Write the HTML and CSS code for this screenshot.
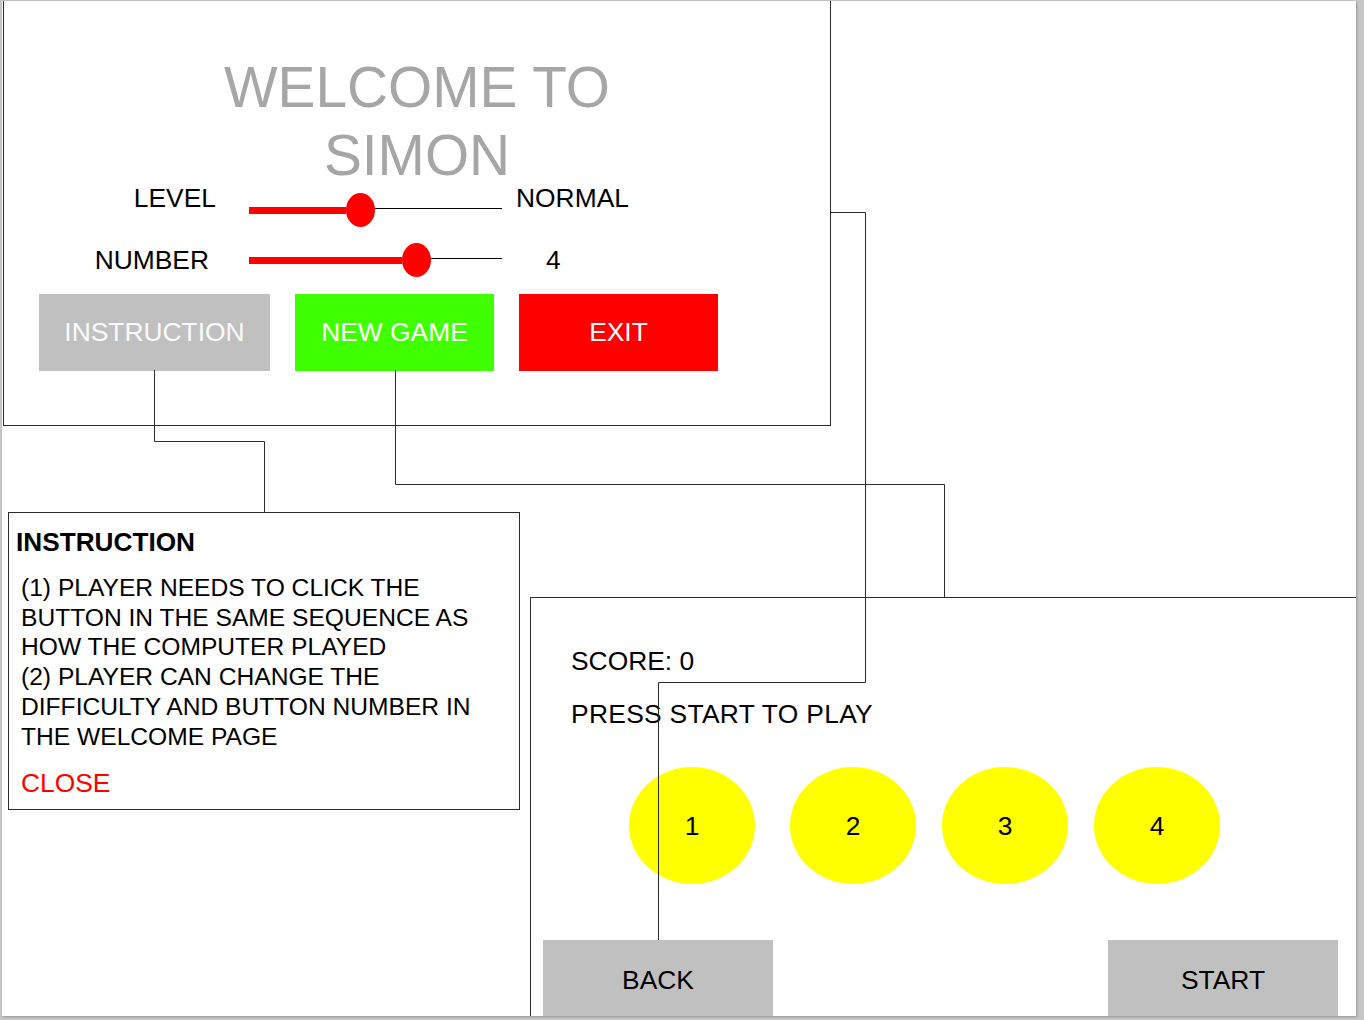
FILE: index.html
```html
<!DOCTYPE html>
<html lang="en">
<head>
<meta charset="utf-8">
<title>Simon wireframe</title>
<link rel="stylesheet" href="styles.css">
</head>
<body>
<div class="sheet">

  <section class="frame welcome">
    <h1 class="welcome-title">WELCOME TO<br>SIMON</h1>

    <div class="setting setting-level">
      <span class="setting-label">LEVEL</span>
      <div class="slider">
        <span class="slider-fill" style="width:97px"></span>
        <span class="slider-knob"></span>
        <span class="slider-rest"></span>
      </div>
      <span class="setting-value">NORMAL</span>
    </div>

    <div class="setting setting-number">
      <span class="setting-label">NUMBER</span>
      <div class="slider">
        <span class="slider-fill" style="width:153px"></span>
        <span class="slider-knob"></span>
        <span class="slider-rest"></span>
      </div>
      <span class="setting-value">4</span>
    </div>

    <div class="menu">
      <button class="menu-btn btn-instruction">INSTRUCTION</button>
      <button class="menu-btn btn-new">NEW GAME</button>
      <button class="menu-btn btn-exit">EXIT</button>
    </div>
  </section>

  <section class="frame instructions">
    <h2 class="instructions-title">INSTRUCTION</h2>
    <p class="instructions-body">(1) PLAYER NEEDS TO CLICK THE<br>BUTTON IN THE SAME SEQUENCE AS<br>HOW THE COMPUTER PLAYED<br>(2) PLAYER CAN CHANGE THE<br>DIFFICULTY AND BUTTON NUMBER IN<br>THE WELCOME PAGE</p>
    <div class="instructions-close">CLOSE</div>
  </section>

  <section class="frame game">
    <div class="game-score">SCORE: 0</div>
    <div class="game-status">PRESS START TO PLAY</div>
    <div class="pads">
      <div class="pad pad-first">1</div>
      <div class="pad">2</div>
      <div class="pad">3</div>
      <div class="pad">4</div>
    </div>
    <div class="game-actions">
      <button class="game-btn">BACK</button>
      <button class="game-btn">START</button>
    </div>
  </section>

  <svg class="connectors" width="1364" height="1020" viewBox="0 0 1364 1020" aria-hidden="true">
    <path d="M154.5 370 V441.5 H264.5 V512"/>
    <path d="M395.5 370 V484.5 H944.5 V597"/>
    <path d="M831 212.5 H865.5 V682.5 H658.5 V940"/>
  </svg>

</div>
</body>
</html>
```

FILE: styles.css
```css
html, body {
  margin: 0;
  padding: 0;
}

body {
  background: #c6c6c6;
  width: 1364px;
  height: 1020px;
  overflow: hidden;
  font-family: "Liberation Sans", Arial, Helvetica, sans-serif;
  color: #000;
}

.sheet {
  position: relative;
  margin: 1px 0 0 2px;
  width: 1354px;
  height: 1015px;
  background: #fff;
  overflow: hidden;
  box-shadow: 1px 1px 2px rgba(0, 0, 0, 0.25);
}

.frame {
  position: absolute;
  box-sizing: border-box;
  border: 1px solid #2b2b2b;
  background: #fff;
}

/* ---------- Welcome window ---------- */
.welcome {
  left: 1px;
  top: -1px;
  width: 828px;
  height: 426px;
  padding-top: 53px;
}

.welcome-title {
  margin: 0 0 -7px;
  font-size: 56.8px;
  line-height: 68px;
  font-weight: normal;
  color: #a6a6a6;
  text-align: center;
}

.setting {
  display: flex;
  align-items: flex-start;
  font-size: 26.4px;
  line-height: 30px;
}

.setting-label {
  flex: none;
  width: 212px;
  box-sizing: border-box;
  text-align: right;
}

.slider {
  flex: none;
  display: flex;
  align-items: center;
  width: 253px;
  height: 34px;
  margin-left: 33px;
}

.slider-fill {
  flex: none;
  height: 7px;
  background: #ff0000;
}

.slider-knob {
  flex: none;
  width: 29px;
  height: 34px;
  border-radius: 50%;
  background: #ff0000;
}

.slider-rest {
  flex: 1;
  height: 1px;
  margin-bottom: 3px;
  background: #000;
}

.setting-value {
  flex: none;
}

.setting-level .slider {
  margin-top: 10px;
}

.setting-level .setting-value {
  margin-left: 14px;
}

.setting-number {
  margin-top: 18px;
}

.setting-number .setting-label {
  padding-right: 7px;
}

.setting-number .slider {
  margin-top: -2px;
}

.setting-number .setting-value {
  margin-left: 44px;
}

.menu {
  display: flex;
  gap: 25px;
  margin-top: 17px;
  padding-left: 35px;
}

.menu-btn {
  flex: none;
  height: 77px;
  width: 199px;
  border: none;
  padding: 0;
  margin: 0;
  font-family: inherit;
  font-size: 26.4px;
  color: #fff;
}

.btn-instruction {
  width: 231px;
  background: #c0c0c0;
  color: #fafafa;
}

.btn-new {
  background: #40ff00;
}

.btn-exit {
  background: #ff0000;
}

/* ---------- Instruction window ---------- */
.instructions {
  left: 6px;
  top: 511px;
  width: 512px;
  height: 298px;
  padding: 14px 0 0 7px;
}

.instructions-title {
  margin: 0;
  font-size: 26.2px;
  line-height: 30px;
  font-weight: bold;
}

.instructions-body {
  margin: 16px 0 0;
  padding-left: 5px;
  font-size: 24.6px;
  line-height: 29.7px;
}

.instructions-close {
  margin-top: 17px;
  padding-left: 5px;
  font-size: 26.4px;
  line-height: 30px;
  color: #ff0000;
}

/* ---------- Game window ---------- */
.game {
  left: 528px;
  top: 596px;
  width: 830px;
  height: 440px;
  padding-top: 48px;
}

.game-score,
.game-status {
  padding-left: 40px;
  font-size: 26.4px;
  line-height: 30px;
}

.game-status {
  margin-top: 23px;
  letter-spacing: 0.3px;
}

.pads {
  display: flex;
  gap: 26px;
  margin-top: 38px;
  padding-left: 98px;
}

.pad {
  flex: none;
  width: 126px;
  height: 117px;
  border-radius: 50%;
  background: #ffff00;
  display: flex;
  align-items: center;
  justify-content: center;
  font-size: 26.4px;
  padding-top: 2px;
  box-sizing: border-box;
}

.pad-first {
  margin-right: 9px;
}

.game-actions {
  display: flex;
  gap: 335px;
  margin-top: 56px;
  padding-left: 12px;
}

.game-btn {
  flex: none;
  width: 230px;
  height: 80px;
  border: none;
  padding: 0;
  margin: 0;
  background: #c0c0c0;
  font-family: inherit;
  font-size: 26.4px;
  color: #000;
}

/* ---------- Connectors (flow arrows of the diagram) ---------- */
.connectors {
  position: absolute;
  left: -2px;
  top: -1px;
  pointer-events: none;
}

.connectors path {
  fill: none;
  stroke: #2b2b2b;
  stroke-width: 1;
}
```
